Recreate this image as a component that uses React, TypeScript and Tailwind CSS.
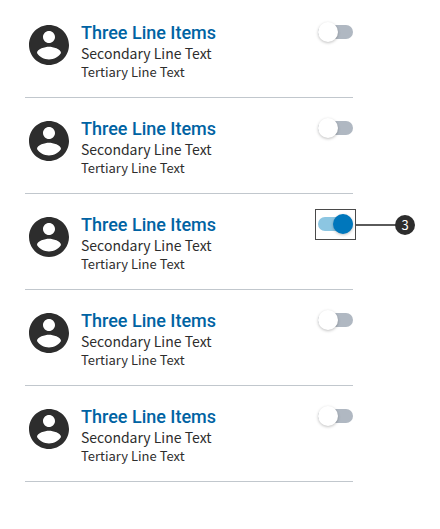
type Item = {
  id: number;
  title: string;
  secondary: string;
  tertiary: string;
  on?: boolean;
  callout?: string;
};

const items: Item[] = [1, 2, 3, 4, 5].map((id) => ({
  id,
  title: "Three Line Items",
  secondary: "Secondary Line Text",
  tertiary: "Tertiary Line Text",
  on: id === 3,
  callout: id === 3 ? "3" : undefined,
}));

const Avatar = () => (
  <svg viewBox="2 2 20 20" className="size-10 flex-none fill-[#2d2d2d]" aria-hidden="true">
    <path d="M12 2C6.48 2 2 6.48 2 12s4.48 10 10 10 10-4.48 10-10S17.52 2 12 2zm0 3c1.66 0 3 1.34 3 3s-1.34 3-3 3-3-1.34-3-3 1.34-3 3-3zm0 14.2c-2.5 0-4.71-1.28-6-3.22.03-1.99 4-3.08 6-3.08 1.99 0 5.97 1.09 6 3.08-1.29 1.94-3.5 3.22-6 3.22z" />
  </svg>
);

const Toggle = ({ on, labelledBy }: { on?: boolean; labelledBy: string }) => (
  <input
    type="checkbox"
    role="switch"
    aria-labelledby={labelledBy}
    defaultChecked={on}
    className="
      relative flex items-center
      w-[35px] h-5
      appearance-none cursor-pointer
      before:absolute before:inset-x-0 before:h-[14px] before:rounded-full before:bg-[#b0b8c2]
      after:relative after:size-5 after:rounded-full after:bg-white
      after:shadow-[0_1px_3px_#00000040]
      checked:before:bg-[#8cc6e2]
      checked:after:ml-auto checked:after:bg-[#0077bc]
    "
  />
);

// Outline, leader line and numbered badge over the control
const Callout = ({ label }: { label: string }) => (
  <div className="absolute -left-[3px] -top-[5px] flex items-center pointer-events-none">
    <div className="w-[41px] h-[31px] border border-[#4a4a4a]" />
    <div className="w-10 h-[2px] bg-[#5a5a5a]" />
    <span className="-ml-px size-5 rounded-full bg-[#2d2d2d] flex items-center justify-center text-white text-[13px] leading-5">
      {label}
    </span>
  </div>
);

const ListRow = ({ item }: { item: Item }) => {
  const titleId = `item-${item.id}`;

  return (
    <li className="flex items-start border-b border-[#c1c7cd] pl-1 pt-5 pb-[17px]">
      <div className="pt-[3px]">
        <Avatar />
      </div>
      <div className="flex-1 pl-3">
        <h2
          id={titleId}
          className="font-['Roboto',sans-serif] text-lg leading-[21px] font-medium text-[#0063a3]"
        >
          {item.title}
        </h2>
        <p className="text-sm leading-[21px]">{item.secondary}</p>
        <p className="text-[13px] leading-4">{item.tertiary}</p>
      </div>
      <div className="relative">
        <Toggle on={item.on} labelledBy={titleId} />
        {item.callout && <Callout label={item.callout} />}
      </div>
    </li>
  );
};

export default function App() {
  return (
    <main className="bg-white pt-[2px] pb-10 pl-[25px] pr-[87px] font-['Noto_Sans_CJK_JP',sans-serif] text-[#2d2d2d]">
      <ul>
        {items.map((item) => (
          <ListRow key={item.id} item={item} />
        ))}
      </ul>
    </main>
  );
}
